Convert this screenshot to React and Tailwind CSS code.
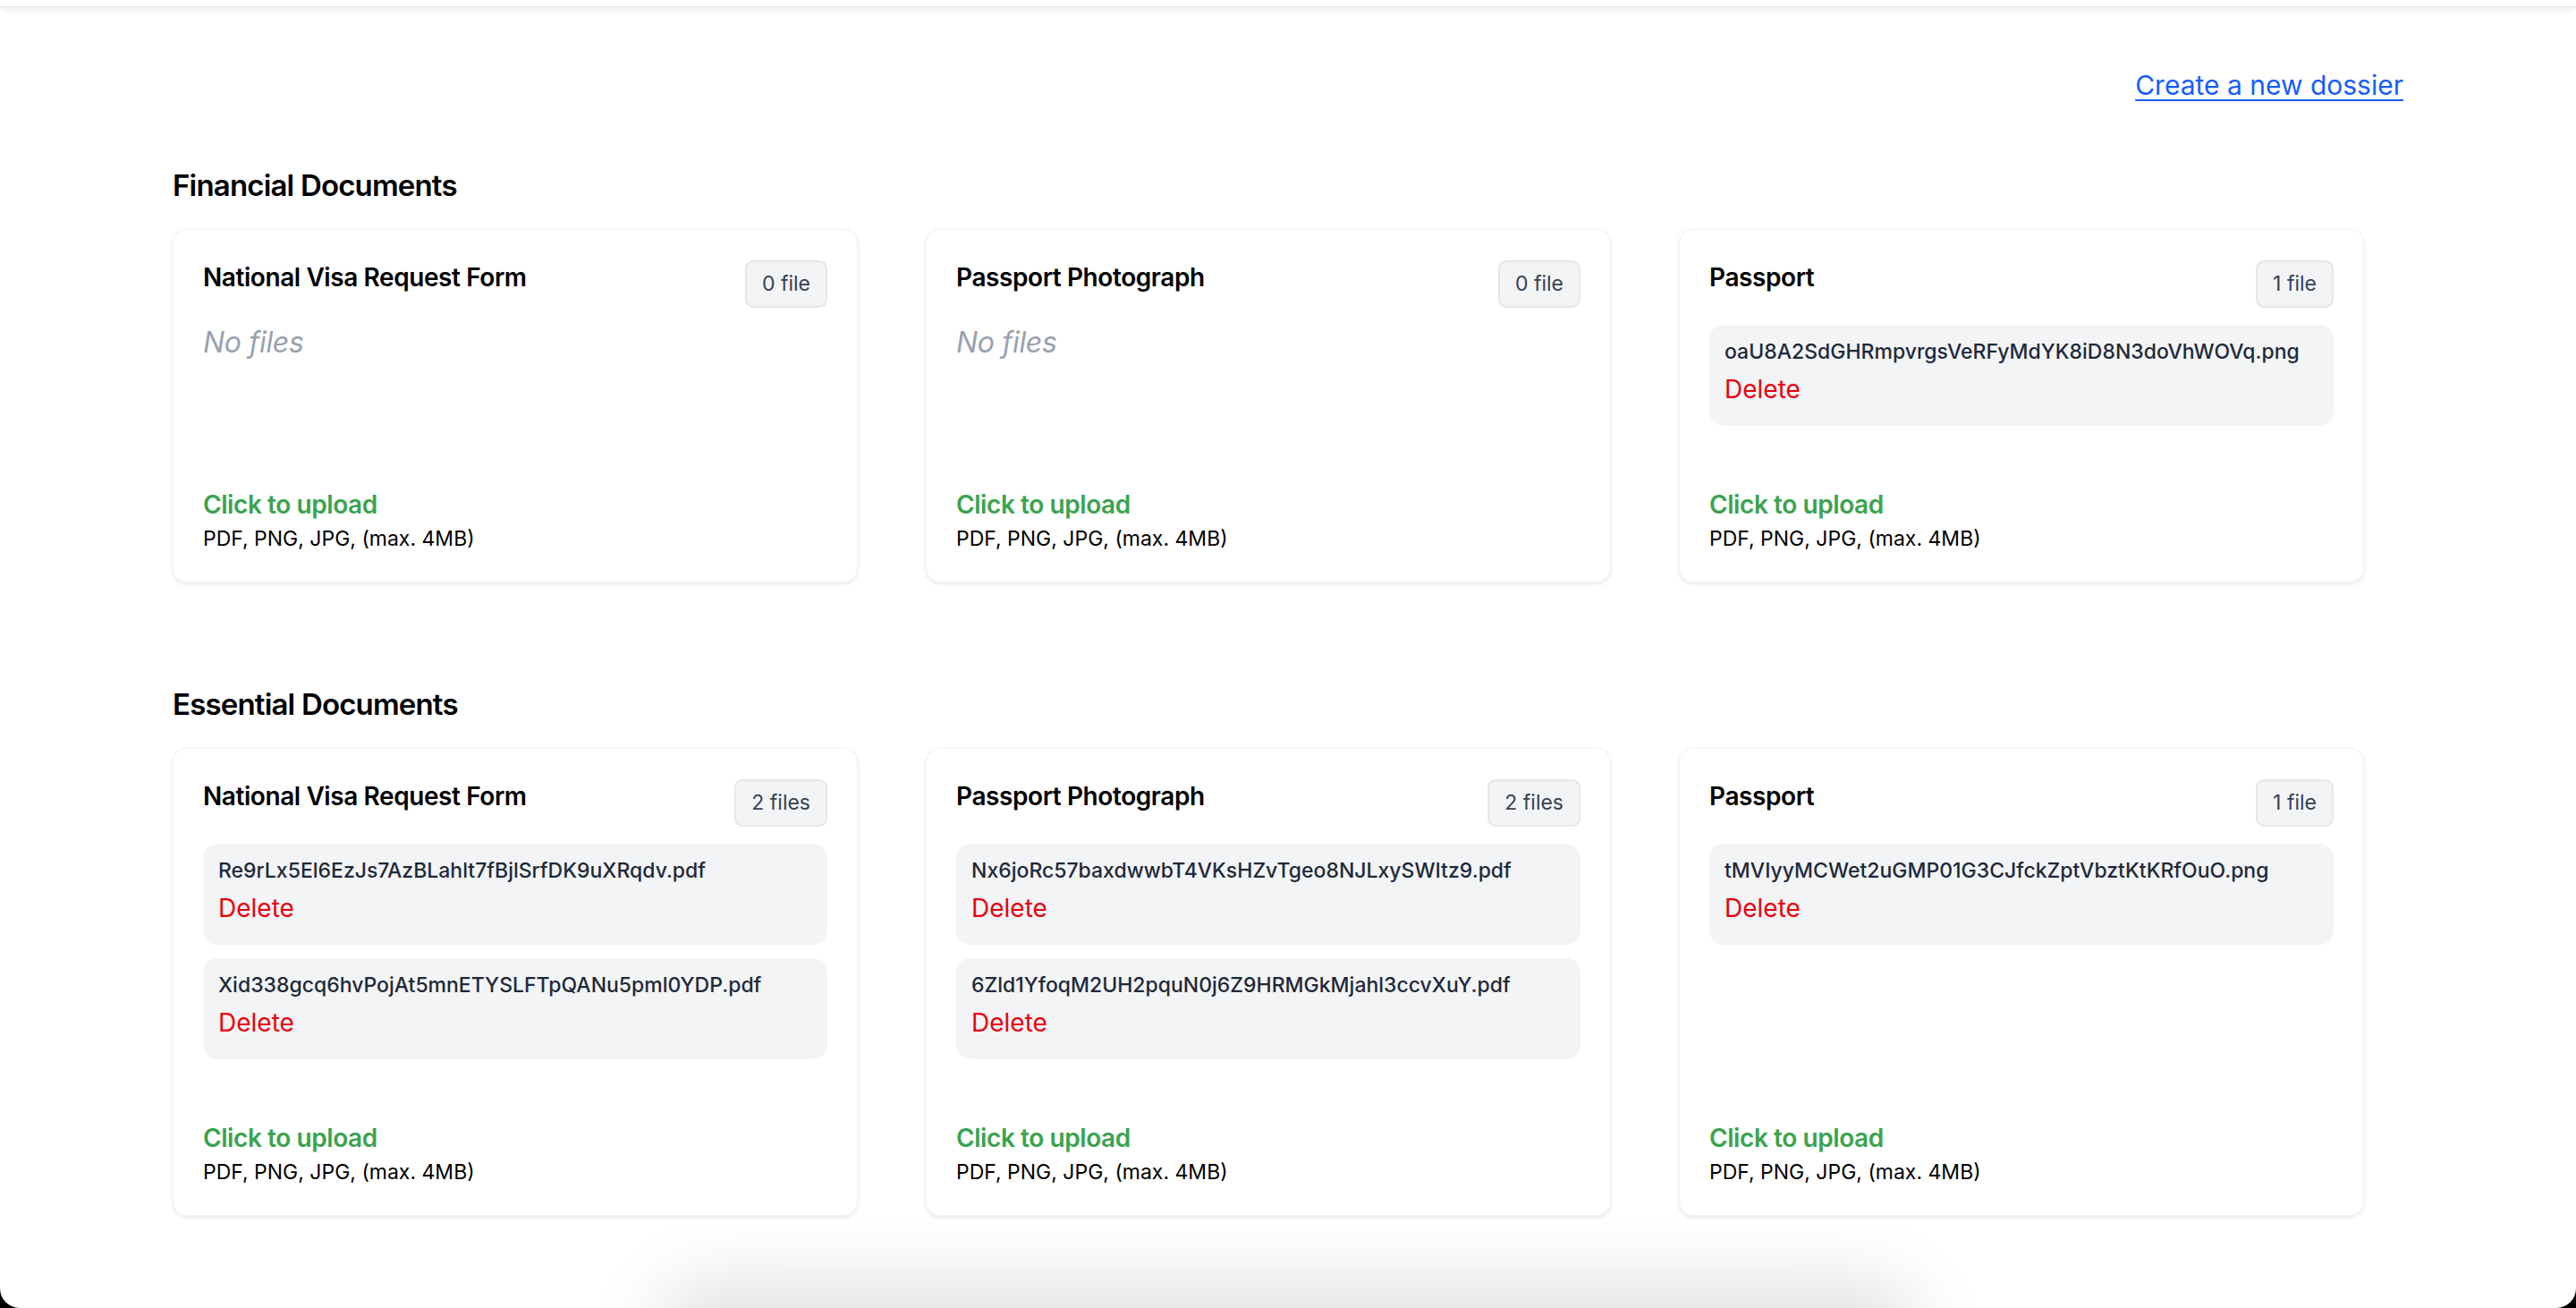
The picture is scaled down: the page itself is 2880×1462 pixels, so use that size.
import React from 'react';

const sections = [
  {
    title: 'Financial Documents',
    docs: [
      { name: 'National Visa Request Form', files: [] },
      { name: 'Passport Photograph', files: [] },
      { name: 'Passport', files: ['oaU8A2SdGHRmpvrgsVeRFyMdYK8iD8N3doVhWOVq.png'] },
    ],
  },
  {
    title: 'Essential Documents',
    docs: [
      {
        name: 'National Visa Request Form',
        files: ['Re9rLx5El6EzJs7AzBLahlt7fBjlSrfDK9uXRqdv.pdf', 'Xid338gcq6hvPojAt5mnETYSLFTpQANu5pml0YDP.pdf'],
      },
      {
        name: 'Passport Photograph',
        files: ['Nx6joRc57baxdwwbT4VKsHZvTgeo8NJLxySWItz9.pdf', '6Zld1YfoqM2UH2pquN0j6Z9HRMGkMjahl3ccvXuY.pdf'],
      },
      { name: 'Passport', files: ['tMVIyyMCWet2uGMP01G3CJfckZptVbztKtKRfOuO.png'] },
    ],
  },
];

function countLabel(n) {
  return n > 1 ? `${n} files` : `${n} file`;
}

function DocCard({ doc }) {
  return (
    <div className="flex flex-col bg-white border border-gray-100 rounded-[16px] shadow-[0_2px_5px_rgba(0,0,0,0.09)] p-[33px] pb-[30px]">
      <div className="flex items-start justify-between">
        <h3 className="text-[28px] leading-[40px] font-semibold tracking-[-0.015em] text-black">{doc.name}</h3>
        <span className="mt-[1px] px-[17px] py-[8px] text-[23px] leading-[33px] text-gray-700 bg-gray-100 border-2 border-gray-200 rounded-[9px]">
          {countLabel(doc.files.length)}
        </span>
      </div>

      <div className="mt-[19px] flex flex-col gap-[15px]">
        {doc.files.length === 0 ? (
          <p className="text-[32px] leading-[40px] italic text-gray-400 tracking-[-0.01em]">No files</p>
        ) : (
          doc.files.map((f) => (
            <div key={f} className="bg-gray-100 rounded-[16px] px-[17px] pt-[14px] pb-[21px]">
              <p className="text-[23px] leading-[32px] font-medium text-gray-800">{f}</p>
              <button className="mt-[6px] text-[28px] leading-[40px] text-red-600">Delete</button>
            </div>
          ))
        )}
      </div>

      <div className="mt-auto pt-[68px]">
        <p className="text-[28px] leading-[40px] font-semibold text-[#3ba34f] tracking-[-0.015em]">Click to upload</p>
        <p className="text-[23px] leading-[36px] text-black">PDF, PNG, JPG, (max. 4MB)</p>
      </div>
    </div>
  );
}

export default function App() {
  return (
    <div className="h-[1462px] bg-black overflow-hidden" style={{ fontFamily: 'Inter, "Noto Sans", sans-serif' }}>
      <div className="relative h-full bg-white rounded-b-[22px] overflow-hidden">
        <div className="h-[8px] bg-white border-b border-gray-200 shadow-[0_3px_8px_rgba(0,0,0,0.08)]" />

        <div className="px-[193px] pt-[67px]">
          <div className="flex justify-end">
            <a href="#" className="text-[30px] leading-[40px] text-blue-600 underline underline-offset-[5px] decoration-2">
              Create a new dossier
            </a>
          </div>

          {sections.map((s, i) => (
            <section key={s.title} className={i === 0 ? 'mt-[70px]' : 'mt-[114px]'}>
              <h2 className="text-[33px] leading-[44px] font-semibold tracking-[-0.025em] text-black">{s.title}</h2>
              <div className="mt-[27px] grid grid-cols-[repeat(3,766px)] gap-x-[76px]">
                {s.docs.map((d) => (
                  <DocCard key={d.name} doc={d} />
                ))}
              </div>
            </section>
          ))}
        </div>

        {/* floating bar just below the fold, only its shadow shows */}
        <div className="absolute left-[760px] top-[1470px] w-[1360px] h-[80px] rounded-[30px] bg-white shadow-[0_-10px_90px_20px_rgba(0,0,0,0.14)]" />
      </div>
    </div>
  );
}
